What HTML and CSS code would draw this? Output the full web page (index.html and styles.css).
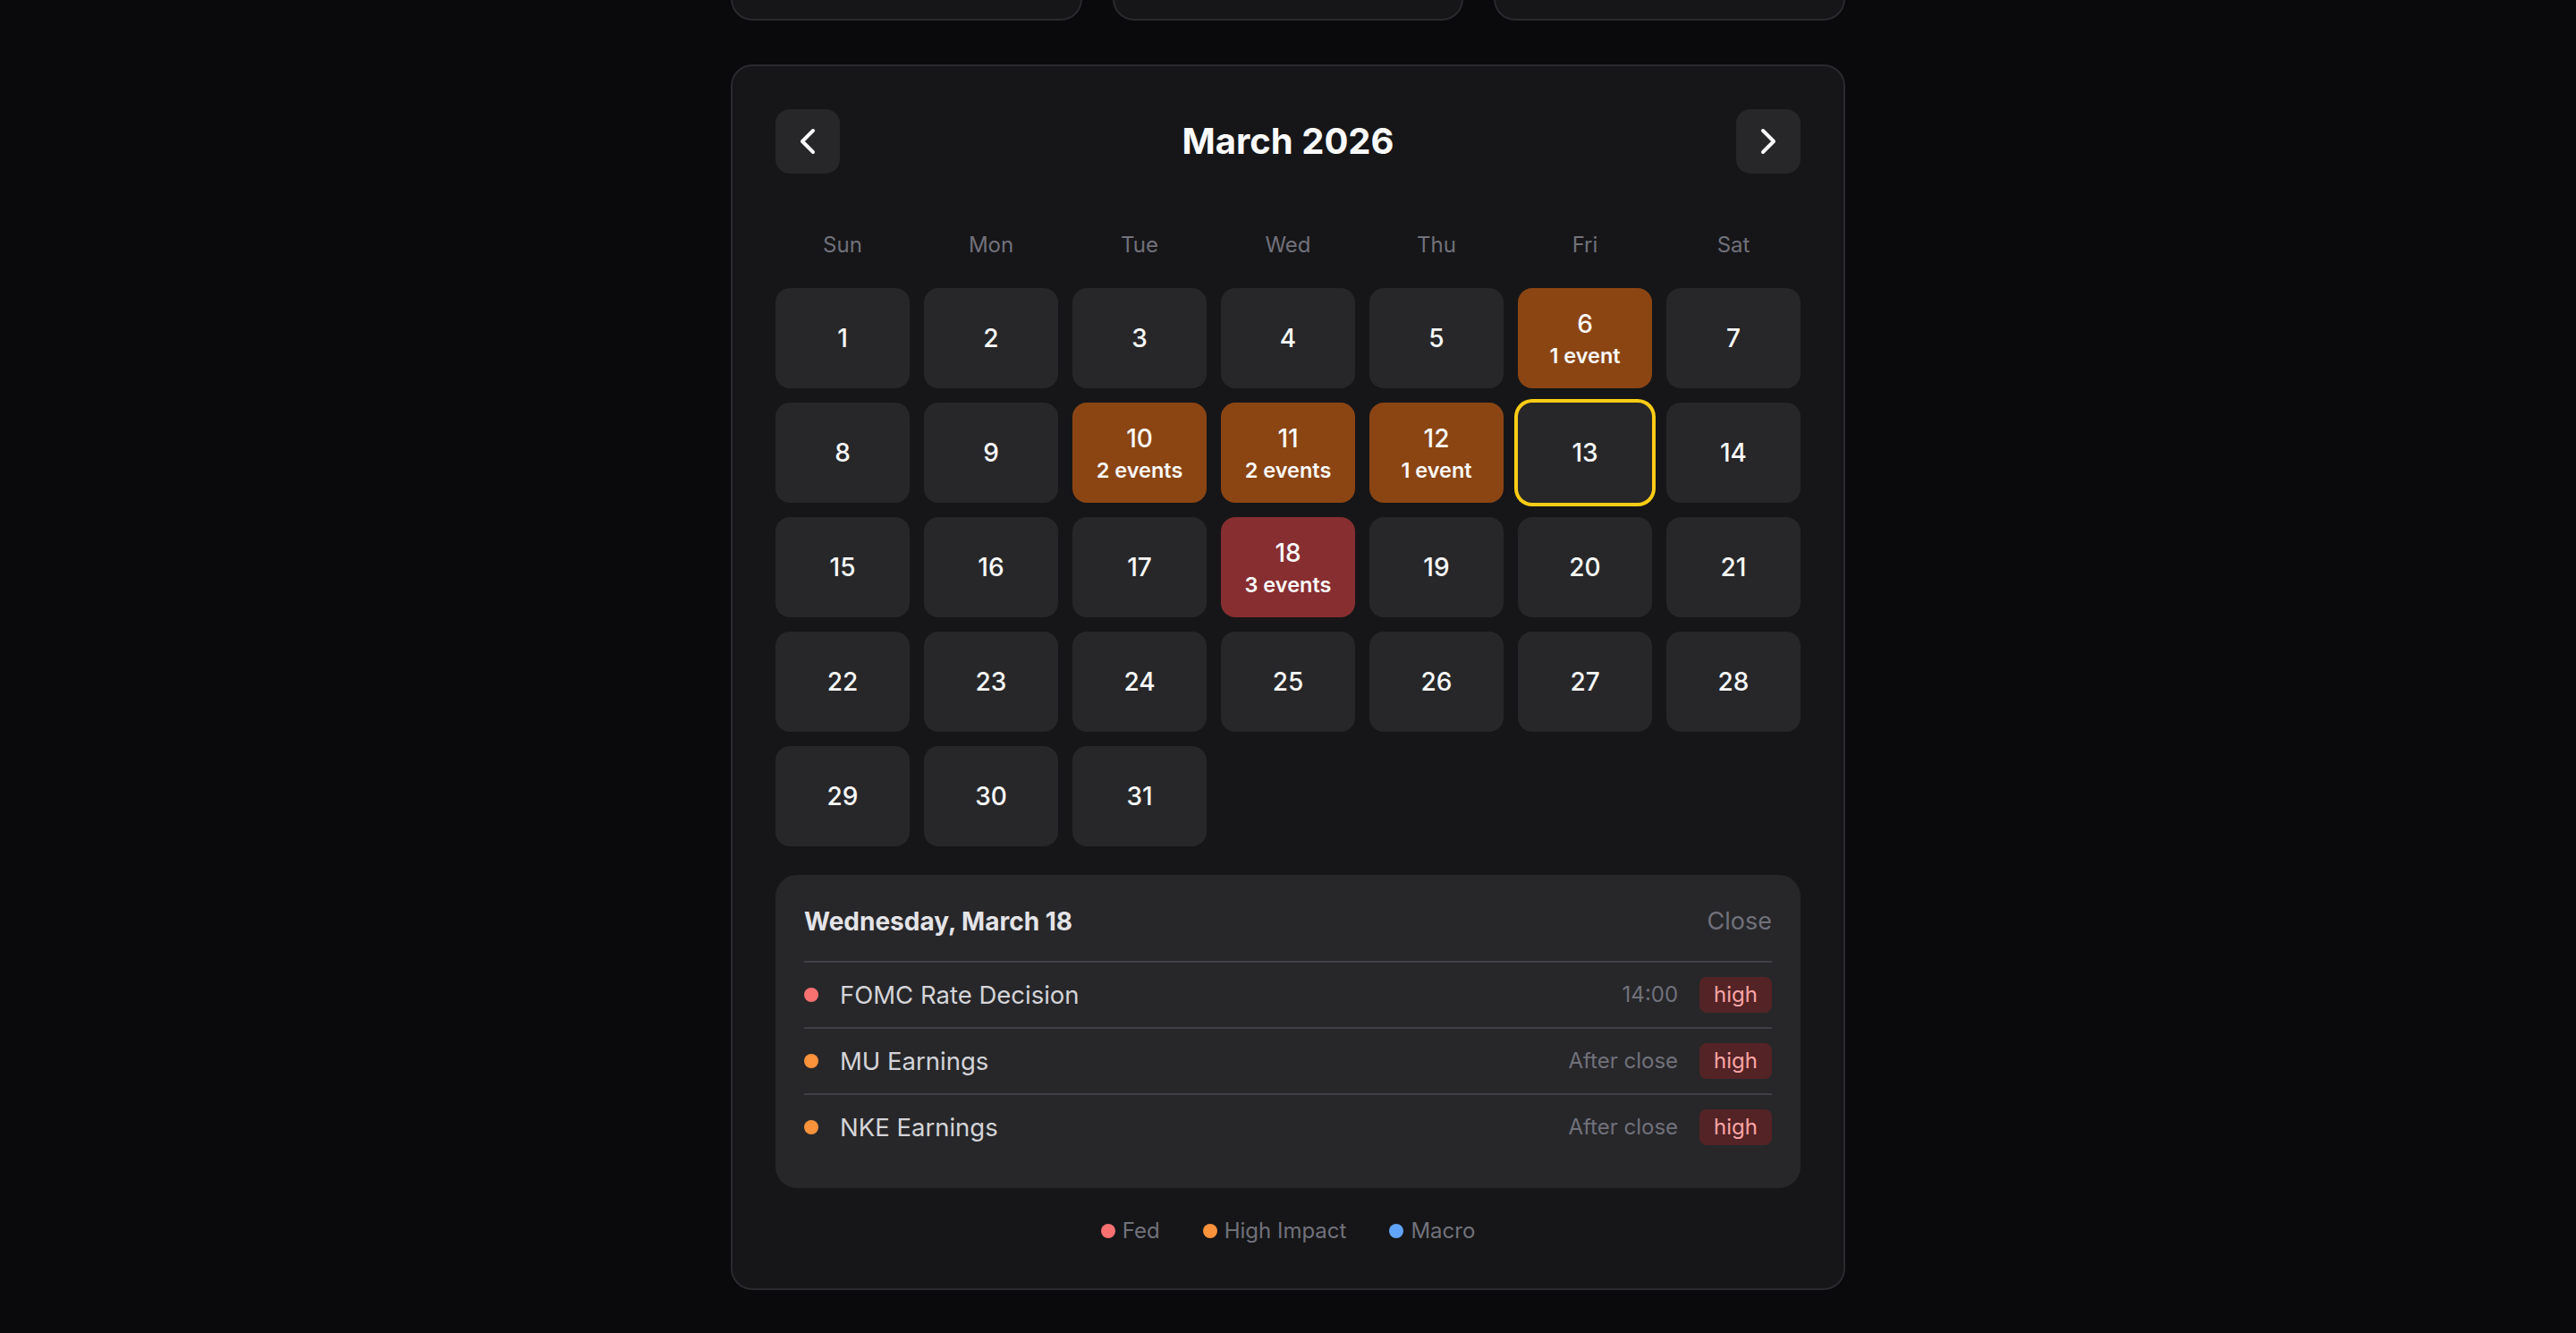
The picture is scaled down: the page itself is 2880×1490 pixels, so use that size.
FILE: index.html
```html
<!DOCTYPE html>
<html lang="en">
<head>
<meta charset="utf-8">
<title>Economic Calendar</title>
<link rel="stylesheet" href="styles.css">
</head>
<body>
<div class="page">
  <div class="top-cards">
    <div class="top-card"></div>
    <div class="top-card"></div>
    <div class="top-card"></div>
  </div>

  <section class="calendar">
    <header class="cal-header">
      <button class="nav-btn" aria-label="Previous month">
        <svg viewBox="0 0 24 24" width="48" height="48" fill="none" stroke="currentColor" stroke-width="2" stroke-linecap="round" stroke-linejoin="round"><path d="m15 18-6-6 6-6"/></svg>
      </button>
      <h1 class="cal-title">March 2026</h1>
      <button class="nav-btn" aria-label="Next month">
        <svg viewBox="0 0 24 24" width="48" height="48" fill="none" stroke="currentColor" stroke-width="2" stroke-linecap="round" stroke-linejoin="round"><path d="m9 18 6-6-6-6"/></svg>
      </button>
    </header>

    <div class="weekdays">
      <div>Sun</div><div>Mon</div><div>Tue</div><div>Wed</div><div>Thu</div><div>Fri</div><div>Sat</div>
    </div>

    <div class="days">
      <div class="day"><span class="num">1</span></div>
      <div class="day"><span class="num">2</span></div>
      <div class="day"><span class="num">3</span></div>
      <div class="day"><span class="num">4</span></div>
      <div class="day"><span class="num">5</span></div>
      <div class="day day-orange"><span class="num">6</span><span class="count">1 event</span></div>
      <div class="day"><span class="num">7</span></div>

      <div class="day"><span class="num">8</span></div>
      <div class="day"><span class="num">9</span></div>
      <div class="day day-orange"><span class="num">10</span><span class="count">2 events</span></div>
      <div class="day day-orange"><span class="num">11</span><span class="count">2 events</span></div>
      <div class="day day-orange"><span class="num">12</span><span class="count">1 event</span></div>
      <div class="day day-today"><span class="num">13</span></div>
      <div class="day"><span class="num">14</span></div>

      <div class="day"><span class="num">15</span></div>
      <div class="day"><span class="num">16</span></div>
      <div class="day"><span class="num">17</span></div>
      <div class="day day-red"><span class="num">18</span><span class="count">3 events</span></div>
      <div class="day"><span class="num">19</span></div>
      <div class="day"><span class="num">20</span></div>
      <div class="day"><span class="num">21</span></div>

      <div class="day"><span class="num">22</span></div>
      <div class="day"><span class="num">23</span></div>
      <div class="day"><span class="num">24</span></div>
      <div class="day"><span class="num">25</span></div>
      <div class="day"><span class="num">26</span></div>
      <div class="day"><span class="num">27</span></div>
      <div class="day"><span class="num">28</span></div>

      <div class="day"><span class="num">29</span></div>
      <div class="day"><span class="num">30</span></div>
      <div class="day"><span class="num">31</span></div>
    </div>

    <div class="detail">
      <div class="detail-head">
        <h2 class="detail-title">Wednesday, March 18</h2>
        <button class="close-btn">Close</button>
      </div>
      <div class="event">
        <span class="dot dot-fed"></span>
        <span class="event-name">FOMC Rate Decision</span>
        <span class="event-time">14:00</span>
        <span class="badge">high</span>
      </div>
      <div class="event">
        <span class="dot dot-high"></span>
        <span class="event-name">MU Earnings</span>
        <span class="event-time">After close</span>
        <span class="badge">high</span>
      </div>
      <div class="event">
        <span class="dot dot-high"></span>
        <span class="event-name">NKE Earnings</span>
        <span class="event-time">After close</span>
        <span class="badge">high</span>
      </div>
    </div>

    <div class="legend">
      <div class="legend-item"><span class="dot dot-fed"></span>Fed</div>
      <div class="legend-item"><span class="dot dot-high"></span>High Impact</div>
      <div class="legend-item"><span class="dot dot-macro"></span>Macro</div>
    </div>
  </section>
</div>
</body>
</html>
```

FILE: styles.css
```css
* { box-sizing: border-box; }

html, body {
  margin: 0;
  padding: 0;
  background: #0a0a0c;
  font-family: Inter, "Noto Sans", "Liberation Sans", sans-serif;
  color: #fafafa;
  overflow: hidden;
}

.page {
  width: 1246px;
  margin: 0 auto;
}

.top-cards {
  display: grid;
  grid-template-columns: repeat(3, 1fr);
  gap: 34px;
  margin-top: -78px;
}

.top-card {
  height: 101px;
  background: #161618;
  border: 2px solid #2a2a2e;
  border-radius: 24px;
}

.calendar {
  margin-top: 49px;
  background: #161618;
  border: 2px solid #2a2a2e;
  border-radius: 24px;
  padding: 48px;
}

.cal-header {
  display: flex;
  align-items: center;
  justify-content: space-between;
  height: 72px;
  margin-bottom: 48px;
}

.nav-btn {
  width: 72px;
  height: 72px;
  border: 0;
  border-radius: 16px;
  background: #27272a;
  color: #fafafa;
  display: flex;
  align-items: center;
  justify-content: center;
  padding: 0;
}

.cal-title {
  margin: 0;
  font-size: 40px;
  line-height: 56px;
  font-weight: 700;
  color: #fafafa;
}

.weekdays {
  display: grid;
  grid-template-columns: repeat(7, 1fr);
  gap: 16px;
  text-align: center;
  font-size: 24px;
  line-height: 32px;
  color: #71717a;
}

.weekdays div {
  padding: 16px 0;
}

.days {
  display: grid;
  grid-template-columns: repeat(7, 1fr);
  grid-auto-rows: 112px;
  gap: 16px;
  margin-top: 16px;
}

.day {
  background: #27272a;
  border-radius: 16px;
  display: flex;
  flex-direction: column;
  align-items: center;
  justify-content: center;
  color: #fafafa;
}

.num {
  font-size: 28px;
  line-height: 40px;
  font-weight: 500;
}

.count {
  font-size: 23.5px;
  line-height: 32px;
  font-weight: 600;
}

.day-orange { background: #8b4513; }
.day-red { background: #872e31; }
.day-today { box-shadow: 0 0 0 4px #facc15; }

.detail {
  margin-top: 32px;
  background: #27272a;
  border-radius: 24px;
  padding: 32px;
}

.detail-head {
  display: flex;
  align-items: center;
  justify-content: space-between;
  padding-bottom: 24px;
  border-bottom: 2px solid #3f3f46;
}

.detail-title {
  margin: 0;
  font-size: 28px;
  line-height: 40px;
  font-weight: 700;
  color: #e4e4e7;
}

.close-btn {
  border: 0;
  background: none;
  padding: 0;
  font-family: inherit;
  font-size: 27px;
  line-height: 40px;
  color: #71717a;
}

.event {
  display: flex;
  align-items: center;
  padding: 16px 0;
  border-bottom: 2px solid #3f3f46;
}

.event:last-child { border-bottom: 0; }

.dot {
  width: 16px;
  height: 16px;
  border-radius: 50%;
  flex: 0 0 16px;
}

.dot-fed { background: #f87171; }
.dot-high { background: #fb923c; }
.dot-macro { background: #60a5fa; }

.event-name {
  flex: 1;
  margin-left: 24px;
  font-size: 27.5px;
  line-height: 40px;
  color: #d4d4d8;
}

.event-time {
  margin-right: 24px;
  font-size: 24px;
  line-height: 32px;
  color: #71717a;
}

.badge {
  height: 40px;
  padding: 0 16px;
  border-radius: 8px;
  background: #532326;
  color: #fca5a5;
  font-size: 24px;
  line-height: 40px;
}

.legend {
  margin-top: 32px;
  display: flex;
  justify-content: center;
  gap: 48px;
  font-size: 24px;
  line-height: 32px;
  color: #71717a;
}

.legend-item {
  display: flex;
  align-items: center;
  gap: 8px;
}
```
